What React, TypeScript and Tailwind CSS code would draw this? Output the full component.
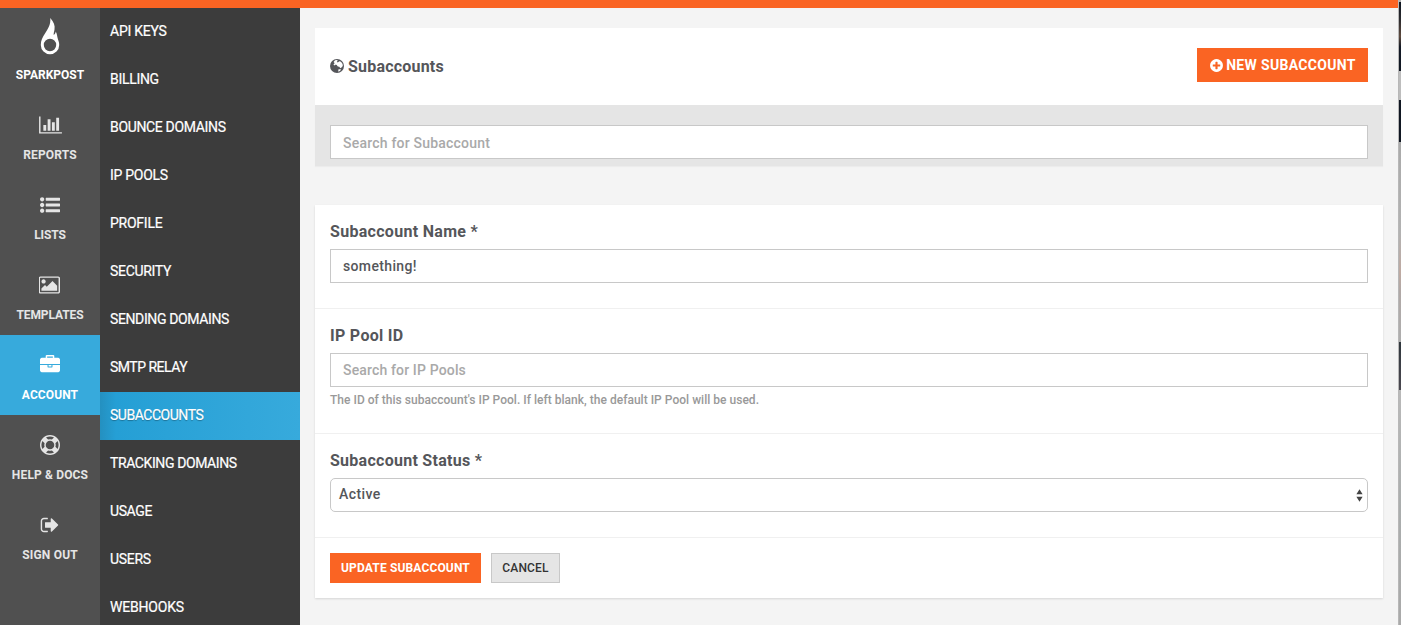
import React from "react";

type IconProps = { w: number; h?: number; vb: string; d: string };

function Glyph({ w, h, vb, d }: IconProps) {
  return (
    <svg width={w} height={h ?? w} viewBox={vb} fill="currentColor" className="block shrink-0">
      <path d={d} />
    </svg>
  );
}

const bars =
  "M640 896v512h-256v-512h256zm384-512v1024h-256v-1024h256zm1024 1152v128h-2048v-1536h128v1408h1920zm-640-896v768h-256v-768h256zm384-384v1152h-256v-1152h256z";
const listUl =
  "M384 1408q0 80-56 136t-136 56-136-56-56-136 56-136 136-56 136 56 56 136zm0-512q0 80-56 136t-136 56-136-56-56-136 56-136 136-56 136 56 56 136zm1408 416v192q0 13-9.5 22.5t-22.5 9.5h-1216q-13 0-22.5-9.5t-9.5-22.5v-192q0-13 9.5-22.5t22.5-9.5h1216q13 0 22.5 9.5t9.5 22.5zm-1408-928q0 80-56 136t-136 56-136-56-56-136 56-136 136-56 136 56 56 136zm1408 416v192q0 13-9.5 22.5t-22.5 9.5h-1216q-13 0-22.5-9.5t-9.5-22.5v-192q0-13 9.5-22.5t22.5-9.5h1216q13 0 22.5 9.5t9.5 22.5zm0-512v192q0 13-9.5 22.5t-22.5 9.5h-1216q-13 0-22.5-9.5t-9.5-22.5v-192q0-13 9.5-22.5t22.5-9.5h1216q13 0 22.5 9.5t9.5 22.5z";
const picture =
  "M576 576q0 80-56 136t-136 56-136-56-56-136 56-136 136-56 136 56 56 136zm1024 384v448h-1408v-192l320-320 160 160 512-512zm96-704h-1600q-13 0-22.5 9.5t-9.5 22.5v1216q0 13 9.5 22.5t22.5 9.5h1600q13 0 22.5-9.5t9.5-22.5v-1216q0-13-9.5-22.5t-22.5-9.5zm160 32v1216q0 66-47 113t-113 47h-1600q-66 0-113-47t-47-113v-1216q0-66 47-113t113-47h1600q66 0 113 47t47 113z";
const briefcase =
  "M640 256h512v-128h-512v128zm1152 640v480q0 66-47 113t-113 47h-1472q-66 0-113-47t-47-113v-480h672v160q0 26 19 45t45 19h320q26 0 45-19t19-45v-160h672zm-768 0v128h-256v-128h256zm768-480v384h-1792v-384q0-66 47-113t113-47h352v-160q0-40 28-68t68-28h576q40 0 68 28t28 68v160h352q66 0 113 47t47 113z";
const lifeRing =
  "M896 0q182 0 348 71t286 191 191 286 71 348-71 348-191 286-286 191-348 71-348-71-286-191-191-286-71-348 71-348 191-286 286-191 348-71zm0 128q-190 0-361 90l194 194q82-28 167-28t167 28l194-194q-171-90-361-90zm-678 1129l194-194q-28-82-28-167t28-167l-194-194q-90 171-90 361t90 361zm678 407q190 0 361-90l-194-194q-82 28-167 28t-167-28l-194 194q171 90 361 90zm0-384q159 0 271.5-112.5t112.5-271.5-112.5-271.5-271.5-112.5-271.5 112.5-112.5 271.5 112.5 271.5 271.5 112.5zm484-217l194 194q90-171 90-361t-90-361l-194 194q28 82 28 167t-28 167z";
const signOut =
  "M704 1440q0 4 1 20t.5 26.5-3 23.5-10 19.5-20.5 6.5h-320q-119 0-203.5-84.5t-84.5-203.5v-704q0-119 84.5-203.5t203.5-84.5h320q13 0 22.5 9.5t9.5 22.5q0 4 1 20t.5 26.5-3 23.5-10 19.5-20.5 6.5h-320q-66 0-113 47t-47 113v704q0 66 47 113t113 47h312l11.5 1 11.5 3 8 5.5 7 9 2 13.5zm928-544q0 26-19 45l-544 544q-19 19-45 19t-45-19-19-45v-288h-448q-26 0-45-19t-19-45v-384q0-26 19-45t45-19h448v-288q0-26 19-45t45-19 45 19l544 544q19 19 19 45z";
const plusCircle =
  "M1344 960v-128q0-26-19-45t-45-19h-256v-256q0-26-19-45t-45-19h-128q-26 0-45 19t-19 45v256h-256q-26 0-45 19t-19 45v128q0 26 19 45t45 19h256v256q0 26 19 45t45 19h128q26 0 45-19t19-45v-256h256q26 0 45-19t19-45zm320-64q0 209-103 385.5t-279.5 279.5-385.5 103-385.5-103-279.5-279.5-103-385.5 103-385.5 279.5-279.5 385.5-103 385.5 103 279.5 279.5 103 385.5z";

function Flame() {
  return (
    <svg width="20" height="38" viewBox="0 0 20 38" className="block">
      <path
        fill="#fff"
        fillRule="evenodd"
        d="M10.300 0C13.800 4 15.200 7.500 14.500 11.500C14.200 13.500 13.600 15 13.700 17C15 16.300 15.600 15 15.700 13.600C17.200 16 17 18.500 18 21.500C18.800 23.500 19.200 25 19.200 27A9.200 9.200 0 0 1 .8 27C.8 22.500 2.500 19.500 5 15.500C8 10.500 10.800 7 10.300 0ZM10 20.800A6.200 6.200 0 1 0 10 33.200A6.200 6.200 0 0 0 10 20.800Z"
      />
    </svg>
  );
}

function Globe() {
  return (
    <svg width="14" height="14" viewBox="0 0 14 14" className="mb-px block shrink-0">
      <circle cx="7" cy="7" r="7" fill="#55565a" />
      <path fill="#fff" d="M5 1.300L7 1L7.800 1.800L6.800 2.800L7.800 3.400L9.300 2.200L11 2.800L12.600 5L12.800 7L11.500 8.600L10.300 9.200L9.300 7.800L7.800 7.400L6.700 6L5.700 5.600L4.800 6.600L3.400 5.500L4.700 4.200L3.600 3Z" />
      <path fill="#fff" d="M8.300 10.600L10.800 10L10.300 11.800L8.300 12.800Z" />
    </svg>
  );
}

const nav = [
  { label: "SPARKPOST", cls: "", icon: <Flame /> },
  { label: "REPORTS", cls: "tracking-[0.15px]", icon: <Glyph w={23} h={20} vb="0 0 2048 1792" d={bars} /> },
  { label: "LISTS", cls: "tracking-[-0.1px]", icon: <Glyph w={20} vb="0 0 1792 1792" d={listUl} /> },
  { label: "TEMPLATES", cls: "tracking-[-0.1px]", icon: <Glyph w={22} h={20} vb="0 0 1920 1792" d={picture} /> },
  { label: "ACCOUNT", cls: "tracking-[0.1px]", icon: <Glyph w={20} vb="0 0 1792 1792" d={briefcase} /> },
  { label: "HELP & DOCS", cls: "tracking-[0.15px]", icon: <Glyph w={20} vb="0 0 1792 1792" d={lifeRing} /> },
  { label: "SIGN OUT", cls: "tracking-[0.2px]", icon: <Glyph w={20} vb="0 0 1792 1792" d={signOut} /> },
];

const menu = [
  { label: "API KEYS", cls: "tracking-[-0.25px]" },
  { label: "BILLING", cls: "tracking-[-0.3px]" },
  { label: "BOUNCE DOMAINS", cls: "tracking-[-0.34px]" },
  { label: "IP POOLS", cls: "tracking-[-0.28px]" },
  { label: "PROFILE", cls: "tracking-[-0.25px]" },
  { label: "SECURITY", cls: "tracking-[-0.32px]" },
  { label: "SENDING DOMAINS", cls: "tracking-[-0.38px]" },
  { label: "SMTP RELAY", cls: "tracking-[-0.5px]" },
  {
    label: "SUBACCOUNTS",
    cls: "tracking-[-0.47px] bg-[linear-gradient(90deg,#2490c0_0%,#259fd5_8%,#37aadc_100%)] [text-shadow:0_1px_1px_rgba(0,0,0,0.3)]",
  },
  { label: "TRACKING DOMAINS", cls: "tracking-[-0.4px]" },
  { label: "USAGE", cls: "tracking-[-0.4px]" },
  { label: "USERS", cls: "tracking-[-0.3px]" },
  { label: "WEBHOOKS", cls: "tracking-[-0.2px]" },
];

export default function App() {
  return (
    <div className="flex h-[625px] w-[1401px] overflow-hidden bg-[#f4f4f4] font-[Roboto,sans-serif] text-[#55565a]">
      <div className="flex w-[1398px] flex-col">
        <div className="h-2 shrink-0 bg-[#fa6423]" />
        <div className="flex min-h-0 flex-1">
          <nav className="w-[100px] shrink-0 bg-[#505050]">
            {nav.map((n, i) => (
              <div
                key={n.label}
                className={
                  "flex flex-col items-center text-[12px] font-bold " +
                  (i === 0 ? "h-[87px] pt-[10px] text-white" : i === 4 ? "h-20 bg-[#37aadc] pt-5 text-white" : "h-20 pt-5 text-[#e5e5e5]")
                }
              >
                <div className={i === 0 ? "h-[47px]" : "h-[30px]"}>{n.icon}</div>
                <span className={"whitespace-nowrap leading-5 " + n.cls}>{n.label}</span>
              </div>
            ))}
          </nav>
          <aside className="w-[200px] shrink-0 overflow-hidden bg-[#3c3c3c]">
            {menu.map((m) => (
              <div key={m.label} className={"h-12 pl-[10px] text-[14px] leading-[47px] whitespace-nowrap text-white [-webkit-text-stroke:0.2px_white] " + m.cls}>
                {m.label}
              </div>
            ))}
          </aside>
          <main className="flex flex-1 flex-col px-[15px] pt-5">
            <section>
              <div className="flex h-[77px] items-center justify-between bg-white px-[15px]">
                <h1 className="flex items-center gap-1 text-[16px] font-bold tracking-[0.2px]"><Globe />Subaccounts</h1>
                <button className="mb-[3px] flex h-[34px] w-[171px] items-center justify-center gap-[2px] bg-[#fa6423] text-[14px] font-bold tracking-[0.33px] whitespace-nowrap text-white">
                  <Glyph w={15} vb="0 0 1792 1792" d={plusCircle} />NEW SUBACCOUNT
                </button>
              </div>
              <div className="h-[61px] bg-[#e5e5e5] px-[15px] pt-5 shadow-[0_1px_1px_rgba(0,0,0,0.03)]">
                <div className="h-[34px] border border-[#c8c8c8] bg-white px-3 text-[14px] leading-[34px] font-medium tracking-[0.21px] text-[#a9a9a9]">Search for Subaccount</div>
              </div>
            </section>
            <section className="mt-[39px] bg-white shadow-[0_1px_2px_rgba(0,0,0,0.12)]">
              <div className="h-[104px] border-b border-[#f0f0f0] px-[15px] pt-[17px]">
                <label className="block h-[27px] text-[16px] leading-5 font-bold tracking-[0.3px]">Subaccount Name *</label>
                <div className="h-[34px] border border-[#c8c8c8] px-3 text-[14px] leading-8 font-medium tracking-[0.35px]">something!</div>
              </div>
              <div className="h-[125px] border-b border-[#f0f0f0] px-[15px] pt-[17px]">
                <label className="block h-[27px] text-[16px] leading-5 font-bold tracking-[0.3px]">IP Pool ID</label>
                <div className="h-[34px] border border-[#c8c8c8] px-3 text-[14px] leading-8 font-medium tracking-[0.15px] text-[#a9a9a9]">Search for IP Pools</div>
                <p className="mt-1 text-[12px] leading-[18px] font-medium tracking-[0.02px] text-[#999]">The ID of this subaccount's IP Pool. If left blank, the default IP Pool will be used.</p>
              </div>
              <div className="h-[104px] border-b border-[#f0f0f0] px-[15px] pt-[17px]">
                <label className="block h-[27px] text-[16px] leading-5 font-bold tracking-[0.27px]">Subaccount Status *</label>
                <div className="flex h-[34px] items-center justify-between rounded-[5px] border border-[#c8c8c8] pr-1 pl-2 text-[14px] font-medium">
                  <span className="mb-0.5 tracking-[0.4px]">Active</span>
                  <svg width="7" height="13" viewBox="0 0 7 13" fill="#444"><path d="M3.500 .3L6.600 5.200H.4ZM3.500 12.700L.4 7.800H6.600Z" /></svg>
                </div>
              </div>
              <div className="flex h-[60px] gap-[10px] px-[15px] pt-[15px]">
                <button className="h-[30px] w-[151px] bg-[#fa6423] text-[12px] font-bold tracking-[0.15px] text-white">UPDATE SUBACCOUNT</button>
                <button className="h-[30px] w-[69px] border border-[#c8c8c8] bg-[#e5e5e5] text-[12px] font-medium tracking-[0.15px] text-[#333]">CANCEL</button>
              </div>
            </section>
          </main>
        </div>
      </div>
      <div className="flex w-[3px] flex-col border-l border-black/25">
        <div className="h-[2px] bg-[#b5b5b5]" />
        <div className="h-[69px] bg-[linear-gradient(#111722_0%,#2a2a2e_25%,#5e4a3e_50%,#141a26_65%,#111722_100%)]" />
        <div className="h-[29px] bg-[#bdbdbd]" />
        <div className="h-[42px] bg-[#111722]" />
        <div className="h-[200px] bg-[linear-gradient(#aaa_0%,#b2b2b2_45%,#bfaaa2_65%,#b0a8a6_75%,#aeaeae_100%)]" />
        <div className="h-[48px] bg-[linear-gradient(#30373d,#4b4850)]" />
        <div className="flex-1 bg-[linear-gradient(#b9b9b9,#aaadad_50%,#a9a9a9)]" />
      </div>
    </div>
  );
}
